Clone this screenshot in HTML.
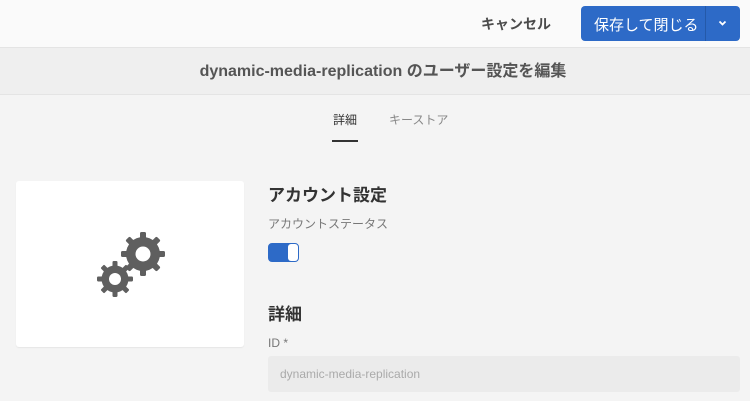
<!DOCTYPE html>
<html><head><meta charset="utf-8"><style>
body{margin:0;width:750px;height:401px;overflow:hidden;background:#f4f4f4;font-family:"Liberation Sans","Noto Sans CJK JP",sans-serif;position:relative}
.top{position:absolute;left:0;top:0;width:750px;height:47px;background:#fafafa;border-bottom:1px solid #e4e4e4}
.cancel{position:absolute;left:481px;top:14px;font-size:14px;font-weight:bold;color:#4b4b4b}
.btn{position:absolute;left:581px;top:6px;width:159px;height:35px;background:#2d6ac7;border-radius:4px;color:#fff}
.btn span{position:absolute;left:13px;top:8px;font-size:15px}
.btn i{position:absolute;left:124px;top:0;width:1px;height:35px;background:#2459a9}
.title{position:absolute;left:0;top:48px;width:750px;height:47px;background:#efefef;border-bottom:1px solid #e4e4e4;text-align:center;line-height:47px;font-size:16px;font-weight:bold;color:#555;padding-left:16px;box-sizing:border-box}
.tab{position:absolute;top:111px;font-size:12px}
.card{position:absolute;left:16px;top:181px;width:228px;height:166px;background:#fff;border-radius:3px;box-shadow:0 1px 1px #e6e6e6}
.h{position:absolute;font-size:17px;font-weight:bold;color:#333}
.lbl{position:absolute;font-size:12px;color:#777}
.tog{position:absolute;left:268px;top:243px;width:31px;height:19px;border:1px solid #2d6ac7;border-radius:4px;background:#2d6ac7;box-sizing:border-box}
.tog b{position:absolute;right:0;top:0;width:10px;height:17px;background:#fff;border-radius:3px}
.inp{position:absolute;left:268px;top:356px;width:472px;height:36px;background:#ebebeb;border-radius:3px;font-size:12px;color:#aaa;line-height:36px;text-indent:12px}
</style></head><body>
<div class="top"></div>
<div class="cancel">キャンセル</div>
<div class="btn"><span>保存して閉じる</span><i></i><svg style="position:absolute;left:137px;top:14px" width="9" height="7" viewBox="0 0 9 7"><path d="M1.5 1.5L4.5 4.5L7.5 1.5" stroke="#fff" stroke-width="1.8" fill="none"/></svg></div>
<div class="title">dynamic-media-replication のユーザー設定を編集</div>
<div class="tab" style="left:333px;color:#333">詳細</div>
<div style="position:absolute;left:332px;top:140px;width:26px;height:2px;background:#333"></div>
<div class="tab" style="left:389px;color:#888">キーストア</div>
<div class="card"><svg width="228" height="166" viewBox="0 0 228 166">
<g transform="translate(127,73)" fill="#5f5f5f">
<rect x="-3" y="-22" width="6" height="44" rx="1.5"/><rect x="-3" y="-22" width="6" height="44" rx="1.5" transform="rotate(45)"/><rect x="-3" y="-22" width="6" height="44" rx="1.5" transform="rotate(90)"/><rect x="-3" y="-22" width="6" height="44" rx="1.5" transform="rotate(135)"/>
<circle r="17"/><circle r="7.5" fill="#fff"/></g>
<g transform="translate(99,98)" fill="#5f5f5f">
<rect x="-2.5" y="-18" width="5" height="36" rx="1.2"/><rect x="-2.5" y="-18" width="5" height="36" rx="1.2" transform="rotate(45)"/><rect x="-2.5" y="-18" width="5" height="36" rx="1.2" transform="rotate(90)"/><rect x="-2.5" y="-18" width="5" height="36" rx="1.2" transform="rotate(135)"/>
<circle r="13.5"/><circle r="6" fill="#fff"/></g>
</svg></div>
<div class="h" style="left:268px;top:181px">アカウント設定</div>
<div class="lbl" style="left:268px;top:215px">アカウントステータス</div>
<div class="tog"><b></b></div>
<div class="h" style="left:268px;top:300px">詳細</div>
<div class="lbl" style="left:268px;top:336px">ID *</div>
<div class="inp">dynamic-media-replication</div>
</body></html>
